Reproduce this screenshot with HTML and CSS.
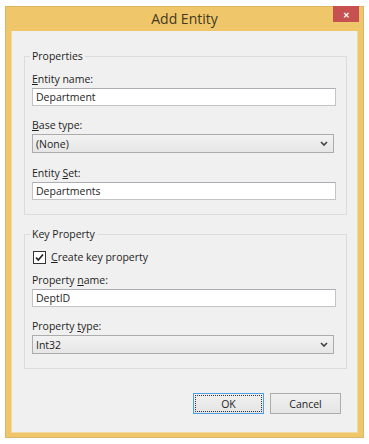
FILE: index.html
```html
<!DOCTYPE html>
<html lang="en">
<head>
    <meta charset="UTF-8">
    <title>Add Entity</title>
    <link rel="stylesheet" href="styles.css">
</head>
<body>
<div class="window">
    <div class="titlebar">
        <span class="title">Add Entity</span>
        <span class="close">&#x2715;</span>
    </div>
    <div class="client">
        <!-- Properties -->
        <fieldset class="group">
            <legend>Properties</legend>
            <label class="caption"><u>E</u>ntity name:</label>
            <input class="textbox" type="text" value="Department">
            <label class="caption"><u>B</u>ase type:</label>
            <div class="combo">
                <span>(None)</span>
                <svg width="8" height="5" viewBox="0 0 8 5"><path d="M1 1 L4 4 L7 1" fill="none" stroke="#444" stroke-width="1.7"/></svg>
            </div>
            <label class="caption">Entity <u>S</u>et:</label>
            <input class="textbox" type="text" value="Departments">
        </fieldset>
        <!-- Key Property -->
        <fieldset class="group second">
            <legend>Key Property</legend>
            <div class="check-row">
                <span class="checkbox">
                    <svg width="11" height="11" viewBox="0 0 11 11"><path d="M2 5.5 L4.3 8 L9 2.5" fill="none" stroke="#222" stroke-width="1.7"/></svg>
                </span>
                <span><u>C</u>reate key property</span>
            </div>
            <label class="caption">Property <u>n</u>ame:</label>
            <input class="textbox" type="text" value="DeptID">
            <label class="caption">Property <u>t</u>ype:</label>
            <div class="combo">
                <span>Int32</span>
                <svg width="8" height="5" viewBox="0 0 8 5"><path d="M1 1 L4 4 L7 1" fill="none" stroke="#444" stroke-width="1.7"/></svg>
            </div>
        </fieldset>
        <div class="buttons">
            <button class="btn default"><span>OK</span></button>
            <button class="btn">Cancel</button>
        </div>
    </div>
</div>
</body>
</html>
```
FILE: styles.css
```css
* {
    margin: 0;
    padding: 0;
    box-sizing: border-box;
}

body {
    background-color: #fff;
    font-family: "Open Sans", "Noto Sans", sans-serif;
    font-size: 10.5px;
    color: #1e1e1e;
}

.window {
    width: 359px;
    height: 432px;
    margin: 6px 0 0 5px;
    background-color: #efc76a;
    border: 1px solid #dcb661;
    display: flex;
    flex-direction: column;
}

.titlebar {
    height: 24px;
    position: relative;
    display: flex;
    justify-content: center;
    align-items: center;
}

.title {
    font-size: 14px;
    color: #43391f;
    margin-top: -1px;
}

.close {
    position: absolute;
    top: -1px;
    right: 4px;
    width: 26px;
    height: 16px;
    background-color: #c75050;
    color: #fff;
    font-size: 8px;
    font-weight: bold;
    display: flex;
    justify-content: center;
    align-items: center;
}

.client {
    flex: 1;
    margin: 0 5px 4px 5px;
    background-color: #f0f0f0;
    border: 1px solid #f3dba0;
    border-top: none;
    padding: 17px 10px 0 12px;
}

.group {
    border: 1px solid #dcdcdc;
    padding: 7px 10px 14px 7px;
    min-width: 0;
}

.group.second {
    margin-top: 11px;
}

.group legend {
    line-height: 16px;
    padding: 0 2px;
    margin-left: -2px;
    color: #1e1e1e;
}

.caption {
    display: block;
    line-height: 16px;
    margin-bottom: 1px;
}

.textbox {
    display: block;
    width: 304px;
    height: 18px;
    border: 1px solid #c4c4c4;
    border-top-color: #abadb3;
    background-color: #fff;
    font-family: "Open Sans", "Noto Sans", sans-serif;
    font-size: 10.5px;
    color: #1e1e1e;
    padding: 0 3px;
    outline: none;
    margin-bottom: 11px;
}

.combo {
    width: 302px;
    height: 19px;
    border: 1px solid #acacac;
    background: linear-gradient(#f2f2f2, #e6e6e6);
    display: flex;
    align-items: center;
    justify-content: space-between;
    padding: 0 5px 0 3px;
    margin-bottom: 12px;
}

.group .combo:last-child,
.group .textbox:last-child {
    margin-bottom: 0;
}

.check-row {
    display: flex;
    align-items: center;
    gap: 5px;
    height: 16px;
    margin-bottom: 7px;
    padding-left: 1px;
}

.checkbox {
    width: 13px;
    height: 13px;
    border: 1px solid #333;
    background-color: #fff;
    display: flex;
    justify-content: center;
    align-items: center;
}

.buttons {
    display: flex;
    justify-content: flex-end;
    gap: 6px;
    margin-top: 24px;
    padding-right: 6px;
}

.btn {
    width: 71px;
    height: 21px;
    border: 1px solid #acacac;
    background: linear-gradient(#f0f0f0, #e5e5e5);
    font-family: "Open Sans", "Noto Sans", sans-serif;
    font-size: 10.5px;
    color: #1e1e1e;
    display: flex;
    justify-content: center;
    align-items: center;
}

.btn.default {
    border-color: #4f9ee8;
    padding: 1px;
}

.btn.default span {
    width: 100%;
    height: 100%;
    border: 1px dotted #333;
    display: flex;
    justify-content: center;
    align-items: center;
}
```
